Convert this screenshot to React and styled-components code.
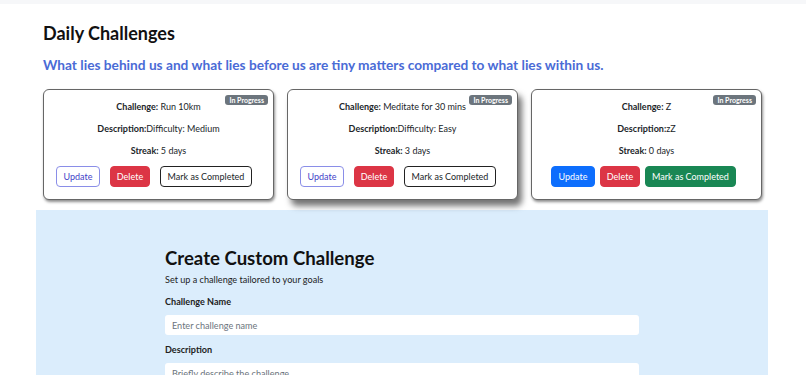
import React from "react";
import styled, { createGlobalStyle } from "styled-components";

const Global = createGlobalStyle`
  html, body { margin: 0; padding: 0; background: #fff; }
  body { font-family: Lato, "Open Sans", sans-serif; color: #212529; }
  * { box-sizing: border-box; }
`;

const TopStrip = styled.div`
  height: 4px;
  background: #f6f7f9;
`;

const Page = styled.div`
  display: flex;
  flex-direction: column;
`;

const Header = styled.header`
  padding: 17px 0 0 43px;
`;

const Title = styled.h1`
  margin: 0;
  font-size: 18px;
  font-weight: 700;
  line-height: 24px;
  color: #111;
`;

const Quote = styled.p`
  margin: 10px 0 0;
  font-size: 13.7px;
  font-weight: 700;
  line-height: 20px;
  color: #4a6bd6;
`;

const CardRow = styled.div`
  display: grid;
  grid-template-columns: repeat(3, 231px);
  gap: 13px;
  padding: 14px 0 0 43px;
`;

const Card = styled.div`
  position: relative;
  border: 1px solid #666;
  border-radius: 6px;
  background: #fff;
  padding: 10px 8px 12px;
  display: flex;
  flex-direction: column;
  align-items: center;
  box-shadow: ${(p) =>
    p.$hover ? "4px 6px 6px rgba(0,0,0,0.55)" : "1px 2px 3px rgba(0,0,0,0.45)"};
`;

const Badge = styled.span`
  position: absolute;
  top: 5px;
  right: 5px;
  background: #6c757d;
  color: #fff;
  font-size: 7px;
  font-weight: 700;
  line-height: 10px;
  padding: 0 4px;
  border-radius: 3px;
`;

const Line = styled.p`
  margin: 0 0 8px;
  font-size: 9px;
  line-height: 14px;
  text-align: center;
  color: #212529;
  b { font-weight: 700; }
`;

const Actions = styled.div`
  display: flex;
  gap: ${(p) => p.$gap}px;
  justify-content: center;
  margin-left: ${(p) => p.$shift}px;
`;

const variants = {
  outlinePrimary: "border:1px solid #8a8ee8; color:#3f3fc8; background:#fff;",
  danger: "border:1px solid #dc3545; color:#fff; background:#dc3545;",
  outlineDark: "border:1px solid #222; color:#212529; background:#fff;",
  primary: "border:1px solid #0d6efd; color:#fff; background:#0d6efd;",
  success: "border:1px solid #198754; color:#fff; background:#198754;",
};

const Btn = styled.button`
  height: 21px;
  padding: 0;
  border-radius: 4px;
  font-family: inherit;
  font-size: 9px;
  line-height: 19px;
  white-space: nowrap;
  cursor: pointer;
  ${(p) => variants[p.$v]}
  width: ${(p) => p.$w}px;
`;

const FormSection = styled.section`
  margin: 10px 38px 0 36px;
  background: #dbedfc;
  padding: 35px 0 0;
  display: flex;
  justify-content: center;
  min-height: 170px;
`;

const Form = styled.div`
  width: 474px;
  display: flex;
  flex-direction: column;
`;

const FormTitle = styled.h2`
  margin: 0;
  font-size: 18.6px;
  font-weight: 700;
  line-height: 26px;
  color: #111;
`;

const FormSub = styled.p`
  margin: 2px 0 0;
  font-size: 9.1px;
  line-height: 14px;
  color: #222;
`;

const Label = styled.label`
  margin: 8px 0 0;
  font-size: 9.1px;
  font-weight: 700;
  line-height: 14px;
  color: #222;
`;

const Input = styled.input`
  margin: 6px 0 0;
  height: 20px;
  border: none;
  border-radius: 3px;
  background: #fff;
  padding: 0 7px;
  font-family: inherit;
  font-size: 9.1px;
  color: #222;
  &::placeholder { color: #6c757d; }
`;

const cards = [
  { name: "Run 10km", desc: "Difficulty: Medium", streak: 5, filled: false, gap: 10, shift: -9 },
  { name: "Meditate for 30 mins", desc: "Difficulty: Easy", streak: 3, filled: false, gap: 10, shift: -9, hover: true },
  { name: "Z", desc: "zZ", streak: 0, filled: true, gap: 5, shift: -6 },
];

export default function App() {
  return (
    <>
      <Global />
      <Page>
        <TopStrip />
        <Header>
          <Title>Daily Challenges</Title>
          <Quote>What lies behind us and what lies before us are tiny matters compared to what lies within us.</Quote>
        </Header>
        <CardRow>
          {cards.map((c, i) => (
            <Card key={i} $hover={c.hover}>
              <Badge>In Progress</Badge>
              <Line><b>Challenge:</b> {c.name}</Line>
              <Line><b>Description:</b>{c.desc}</Line>
              <Line><b>Streak:</b> {c.streak} days</Line>
              <Actions $gap={c.gap} $shift={c.shift}>
                <Btn $v={c.filled ? "primary" : "outlinePrimary"} $w={44}>Update</Btn>
                <Btn $v="danger" $w={40}>Delete</Btn>
                <Btn $v={c.filled ? "success" : "outlineDark"} $w={c.filled ? 91 : 92}>Mark as Completed</Btn>
              </Actions>
            </Card>
          ))}
        </CardRow>
        <FormSection>
          <Form>
            <FormTitle>Create Custom Challenge</FormTitle>
            <FormSub>Set up a challenge tailored to your goals</FormSub>
            <Label>Challenge Name</Label>
            <Input placeholder="Enter challenge name" />
            <Label>Description</Label>
            <Input placeholder="Briefly describe the challenge" />
          </Form>
        </FormSection>
      </Page>
    </>
  );
}
